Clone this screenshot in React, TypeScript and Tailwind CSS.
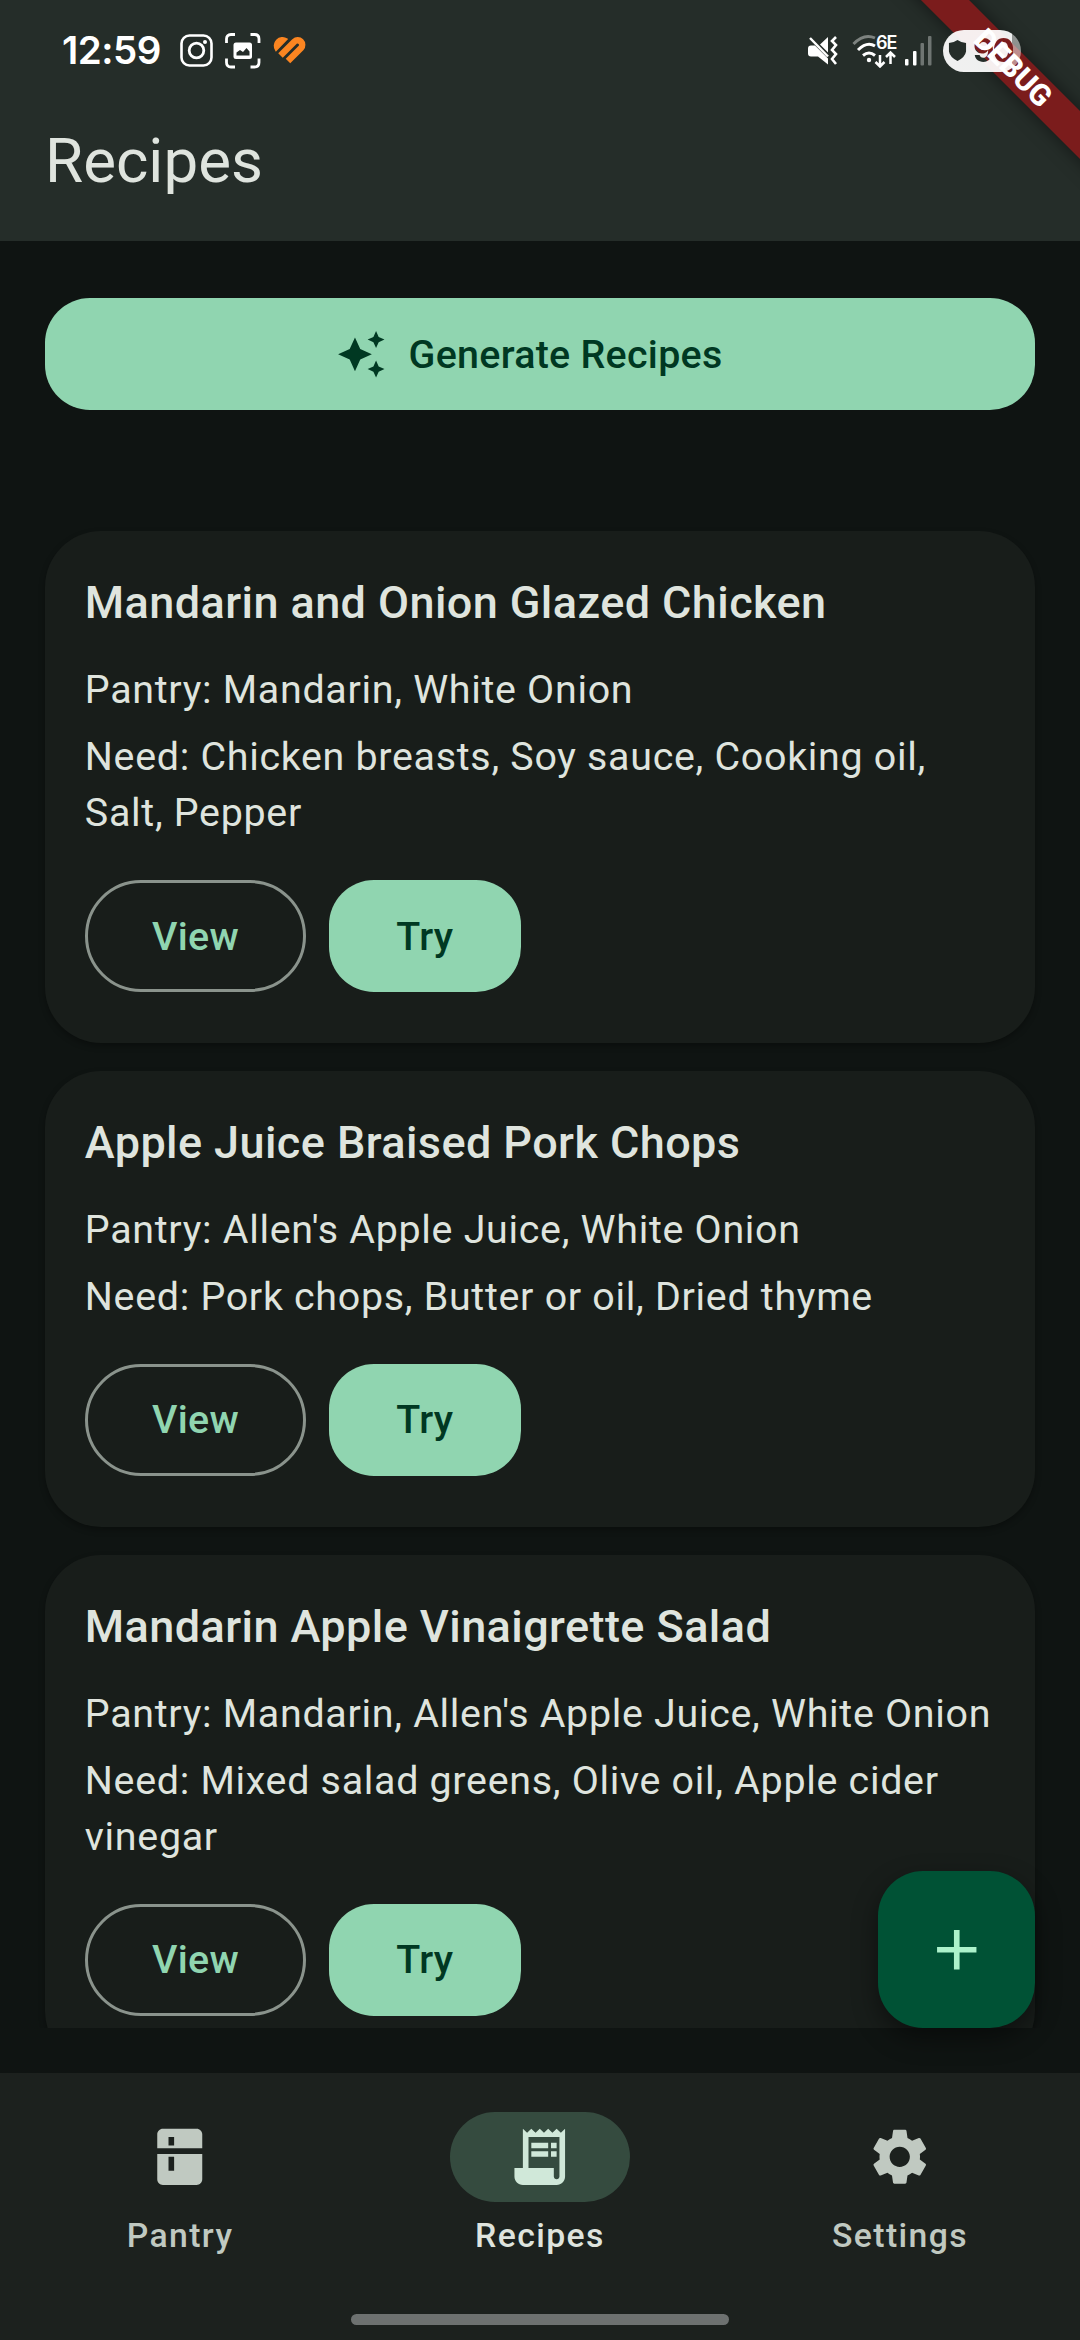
import { MdAutoAwesome, MdKitchen, MdReceiptLong, MdSettings, MdAdd } from "react-icons/md";
import type { IconType } from "react-icons";

interface Recipe {
  title: string;
  pantry: string[];
  need: string[];
}

const recipes: Recipe[] = [
  {
    title: "Mandarin and Onion Glazed Chicken",
    pantry: ["Mandarin", "White Onion"],
    need: ["Chicken breasts", "Soy sauce", "Cooking oil", "Salt", "Pepper"],
  },
  {
    title: "Apple Juice Braised Pork Chops",
    pantry: ["Allen's Apple Juice", "White Onion"],
    need: ["Pork chops", "Butter or oil", "Dried thyme"],
  },
  {
    title: "Mandarin Apple Vinaigrette Salad",
    pantry: ["Mandarin", "Allen's Apple Juice", "White Onion"],
    need: ["Mixed salad greens", "Olive oil", "Apple cider vinegar"],
  },
];

const tabs: { label: string; icon: IconType }[] = [
  { label: "Pantry", icon: MdKitchen },
  { label: "Recipes", icon: MdReceiptLong },
  { label: "Settings", icon: MdSettings },
];

function InstagramIcon() {
  return (
    <svg width="34" height="34" viewBox="0 0 34 34" fill="none" stroke="white">
      <rect x="1.5" y="1.5" width="30" height="30" rx="8" strokeWidth="2.6" />
      <circle cx="16.5" cy="16.5" r="7.3" strokeWidth="2.8" />
      <circle cx="25" cy="8" r="2" fill="white" stroke="none" />
    </svg>
  );
}

function CaptureIcon() {
  return (
    <svg width="36" height="36" viewBox="0 0 36 36" fill="none">
      <path
        d="M1.5 10V6q0-4.5 4.5-4.5h4M25.500 1.500h4q4.500 0 4.500 4.500v4M34 25.500v4q0 4.500-4.500 4.500h-4M10 34H6q-4.500 0-4.500-4.500v-4"
        stroke="white"
        strokeWidth="2.8"
      />
      <rect x="8.5" y="9.5" width="18.5" height="16.5" rx="2.5" fill="white" />
      <path d="M11.500 22.500v-3l3.500-2.500 3 2 3.500-4 3 3.500v4z" fill="#252d29" />
    </svg>
  );
}

function HeartIcon() {
  return (
    <svg width="36" height="32" viewBox="0 0 36 32" fill="none">
      <path d="M4 15.500L15 4.200A8 8 0 0 0 4 15.500z" fill="#fb8521" stroke="#fb8521" strokeWidth="1.500" />
      <path
        d="M8.500 20.500L22.500 6.500A4.600 4.600 0 0 1 29 13L16 26"
        stroke="#fb8521"
        strokeWidth="6.400"
      />
    </svg>
  );
}

function MutedIcon() {
  return (
    <svg width="30" height="30" viewBox="0 0 30 30" fill="none">
      <path d="M3 9.500h4l13 13v6l-10-8H3q-3 0-3-3v-5q0-3 3-3zM20 1v15.500L12 8.500z" fill="white" />
      <path d="M2 2l18 18.500" stroke="white" strokeWidth="2.500" />
      <path d="M28 1l-4 4 4 4-4 5 4 4-4 5 4 5" stroke="white" strokeWidth="2.600" />
    </svg>
  );
}

function WifiIcon() {
  return (
    <svg width="46" height="34" viewBox="0 0 46 34" fill="none">
      <path d="M1.500 10Q12-1 23 4" stroke="#7d827f" strokeWidth="3" />
      <path d="M6 16q9-9 17-4M11 21.500q6-5 12 0" stroke="white" strokeWidth="3" />
      <circle cx="17" cy="26" r="2.2" fill="white" />
      <path
        d="M28 21v11M23.500 28l4.500 4.500 4.500-4.500M38.500 30V19M34 23l4.500-4.500L43 23"
        stroke="white"
        strokeWidth="2.5"
      />
      <text x="24" y="15" fontSize="18" fontWeight="600" fill="white" fontFamily="Inter, sans-serif" letterSpacing="-1">
        6E
      </text>
    </svg>
  );
}

function SignalIcon() {
  return (
    <svg width="28" height="30" viewBox="0 0 28 30">
      <rect x="0" y="23" width="3.5" height="6.5" rx="1" fill="white" />
      <rect x="8" y="15" width="3.5" height="14.5" rx="1" fill="white" />
      <rect x="15.5" y="7" width="3.5" height="22.5" rx="1" fill="#6f7572" />
      <rect x="23" y="0" width="3.5" height="29.5" rx="1" fill="#6f7572" />
    </svg>
  );
}

function StatusBar() {
  return (
    <div className="flex h-[84px] items-start justify-between pl-[62px] pr-[59px]">
      <div className="flex h-[101px] items-center">
        <span className="w-[118px] font-['Inter',sans-serif] text-[38.5px] font-semibold leading-none tracking-[-0.5px] text-white">
          12:59
        </span>
        <div className="flex items-center gap-[11px]">
          <InstagramIcon />
          <CaptureIcon />
          <HeartIcon />
        </div>
      </div>
      <div className="flex h-[101px] items-center">
        <MutedIcon />
        <div className="ml-[14px]">
          <WifiIcon />
        </div>
        <div className="ml-[7px]">
          <SignalIcon />
        </div>
        <div className="relative z-20 ml-[10px] flex h-[42px] w-[78px] items-center rounded-full bg-linear-to-r from-white/93 from-89% to-white/50 to-89% pl-[5px]">
          <svg width="19" height="21" viewBox="0 0 20 22" fill="#252d29">
            <path d="M10 0q4 3 9 3v9q-1 6-9 10Q2 18 1 12V3q5 0 9-3z" />
          </svg>
          <span className="ml-[6px] bg-[linear-gradient(45deg,#252d29_28%,#7b1c1c_28%)] bg-clip-text font-['Inter',sans-serif] text-[33px] font-bold leading-none tracking-[-2px] text-transparent">
            90
          </span>
        </div>
      </div>
    </div>
  );
}

function DebugBanner() {
  return (
    <>
      <div className="absolute right-0 top-0 z-10 size-[200px] overflow-hidden">
        <div className="absolute left-[-17px] top-[51px] h-[34px] w-[300px] rotate-45 bg-[#7b1c1c] shadow-[0_0_17px_rgba(0,0,0,0.5)]" />
      </div>
      {/* the label stays readable over the battery pill */}
      <div className="absolute right-0 top-0 z-30 size-[200px] overflow-hidden">
        <div className="absolute left-[-17px] top-[51px] flex h-[34px] w-[300px] rotate-45 items-center justify-center">
          <span className="text-[30px] font-extrabold leading-none text-white">DEBUG</span>
        </div>
      </div>
    </>
  );
}

function RecipeCard({ recipe }: { recipe: Recipe }) {
  return (
    <div className="shrink-0 rounded-[56px] bg-[#181d1a] px-[39.8px] pb-[50.6px] pt-[38.4px] shadow-[0_3px_6px_rgba(0,0,0,0.3)]">
      <h2 className="text-[45px] font-medium leading-[67.5px] tracking-[0.42px]">{recipe.title}</h2>
      <p className="mt-[25px] text-[39.4px] leading-[56.25px] tracking-[0.7px]">{`Pantry: ${recipe.pantry.join(", ")}`}</p>
      <p className="mt-[10.7px] text-[39.4px] leading-[56.25px] tracking-[0.7px]">{`Need: ${recipe.need.join(", ")}`}</p>
      <div className="mt-[38.5px] flex gap-[22.5px] text-[39.4px] font-medium leading-[58px] tracking-[0.28px]">
        <button className="h-[112.5px] w-[221.5px] rounded-full border-[3px] border-[#8a938c] pt-px text-[#90d5b0]">View</button>
        <button className="h-[112.5px] w-[192px] rounded-[45px] bg-[#90d5b0] pt-px text-[#003822]">Try</button>
      </div>
    </div>
  );
}

export default function App() {
  const active = "Recipes";

  return (
    <div className="relative flex h-[2340px] w-[1080px] flex-col overflow-hidden bg-[#0f1412] font-['Roboto',sans-serif] text-[#dfe4de]">
      <header className="h-[241px] shrink-0 bg-[#252d29]">
        <StatusBar />
        <h1 className="pl-[45px] text-[61.9px] leading-[154px]">Recipes</h1>
      </header>

      <main className="flex h-[1787px] shrink-0 flex-col overflow-hidden px-[45px] pt-[56.5px]">
        <button className="flex h-[112.5px] shrink-0 items-center justify-center gap-[22.5px] rounded-[45px] bg-[#90d5b0] pr-[22px] pt-px text-[39.4px] font-medium tracking-[0.28px] text-[#003822]">
          <MdAutoAwesome size={50.6} />
          Generate Recipes
        </button>
        <div className="mt-[121px] flex flex-col gap-[28.1px]">
          {recipes.map((recipe) => (
            <RecipeCard key={recipe.title} recipe={recipe} />
          ))}
        </div>
      </main>

      {/* Add recipe */}
      <button className="absolute left-[877.5px] top-[1870.5px] flex size-[157.5px] items-center justify-center rounded-[45px] bg-[#005235] text-[#acf2cb] shadow-[0_10px_26px_rgba(0,0,0,0.45)]">
        <MdAdd size={67.5} />
      </button>

      <nav className="mt-[45px] flex h-[267px] flex-col items-center bg-[#1c211e]">
        <div className="grid w-full grid-cols-3 pt-[39px]">
          {tabs.map(({ label, icon: Icon }) => (
            <div key={label} className="flex flex-col items-center">
              <div
                className={`flex h-[90px] w-[180px] items-center justify-center rounded-full ${
                  label === active ? "bg-[#354b3f] text-[#d0e8d9]" : "text-[#c0c9c1]"
                }`}
              >
                <Icon size={67.5} />
              </div>
              <span
                className={`mt-[11px] text-[33.75px] font-medium leading-[45px] tracking-[1.4px] ${
                  label === active ? "text-[#dfe4de]" : "text-[#c0c9c1]"
                }`}
              >
                {label}
              </span>
            </div>
          ))}
        </div>
        <div className="mt-[56px] h-[11px] w-[378px] rounded-full bg-[#6d7170]" />
      </nav>

      <DebugBanner />
    </div>
  );
}
